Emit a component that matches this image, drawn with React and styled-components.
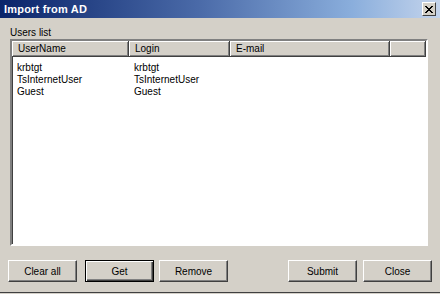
import React from "react";
import styled, { createGlobalStyle } from "styled-components";

const Global = createGlobalStyle`
  html, body { margin: 0; padding: 0; background: #d4d0c8; }
  body { font-family: "Liberation Sans", Arial, sans-serif; font-size: 10px; }
`;

const Dialog = styled.div`
  width: 440px;
  height: 293px;
  background: #d4d0c8;
  border-bottom: 1px solid #404040;
  display: flex;
  flex-direction: column;
  box-sizing: border-box;
`;

const TitleBar = styled.div`
  height: 18px;
  background: linear-gradient(to right, #0a246a 0%, #4a6aa8 45%, #8aaedc 80%, #c4d4ec 100%);
  display: flex;
  align-items: center;
  justify-content: space-between;
  padding: 0 4px 0 4px;
  flex-shrink: 0;
`;

const Title = styled.span`
  color: #fff;
  font-weight: bold;
  font-size: 11px;
  letter-spacing: 0.2px;
`;

const CloseBox = styled.div`
  width: 14px;
  height: 14px;
  box-sizing: border-box;
  background: #d4d0c8;
  border: 1px solid;
  border-color: #fff #404040 #404040 #fff;
  display: flex;
  align-items: center;
  justify-content: center;
`;

const Body = styled.div`
  display: flex;
  flex-direction: column;
  padding: 9px 12px 0 10px;
`;

const Label = styled.div`
  color: #000;
  line-height: 11px;
  margin-bottom: 1px;
`;

const ListBox = styled.div`
  height: 207px;
  background: #fff;
  border: 2px solid;
  border-color: #808080 #fff #fff #808080;
  box-shadow: inset 1px 1px 0 #404040;
  display: flex;
  flex-direction: column;
  box-sizing: border-box;
`;

const Header = styled.div`
  display: flex;
  height: 16px;
  flex-shrink: 0;
`;

const HeadCell = styled.div`
  width: ${(p) => p.w}px;
  box-sizing: border-box;
  background: #d4d0c8;
  border-right: 1px solid #404040;
  border-bottom: 1px solid #404040;
  box-shadow: inset 1px 1px 0 #fff, inset -1px -1px 0 #808080;
  padding-left: 6px;
  line-height: 16px;
  color: #000;
  ${(p) => p.grow && "flex: 1;"}
`;

const Rows = styled.div`
  display: flex;
  flex-direction: column;
  padding-top: 5px;
`;

const Row = styled.div`
  display: flex;
  height: 12px;
  line-height: 12px;
`;

const Cell = styled.div`
  width: ${(p) => p.w}px;
  padding-left: 5px;
  box-sizing: border-box;
  color: #000;
  white-space: nowrap;
`;

const ButtonBar = styled.div`
  display: flex;
  align-items: center;
  padding: 14px 0 0 8px;
`;

const Btn = styled.button`
  width: 69px;
  height: 22px;
  font-family: inherit;
  font-size: 10px;
  color: #000;
  background: #d4d0c8;
  border: 1px solid;
  border-color: #fff #404040 #404040 #fff;
  box-shadow: inset -1px -1px 0 #808080;
  margin-right: ${(p) => p.mr || 0}px;
  padding: 0;
  ${(p) =>
    p.def &&
    `border: 1px solid #000; box-shadow: inset 1px 1px 0 #fff, inset -1px -1px 0 #404040, inset -2px -2px 0 #808080;`}
`;

const cols = [117, 101, 160];
const rows = [
  ["krbtgt", "krbtgt"],
  ["TsInternetUser", "TsInternetUser"],
  ["Guest", "Guest"],
];

export default function App() {
  return (
    <>
      <Global />
      <Dialog>
        <TitleBar>
          <Title>Import from AD</Title>
          <CloseBox>
            <svg width="8" height="7" viewBox="0 0 8 7">
              <path d="M0 0 L7 7 M1 0 L8 7 M7 0 L0 7 M8 0 L1 7" stroke="#000" strokeWidth="1" />
            </svg>
          </CloseBox>
        </TitleBar>
        <Body>
          <Label>Users list</Label>
          <ListBox>
            <Header>
              <HeadCell w={cols[0]}>UserName</HeadCell>
              <HeadCell w={cols[1]}>Login</HeadCell>
              <HeadCell w={cols[2]}>E-mail</HeadCell>
              <HeadCell grow />
            </Header>
            <Rows>
              {rows.map((r) => (
                <Row key={r[0]}>
                  <Cell w={cols[0]}>{r[0]}</Cell>
                  <Cell w={cols[1]}>{r[1]}</Cell>
                </Row>
              ))}
            </Rows>
          </ListBox>
        </Body>
        <ButtonBar>
          <Btn mr={8}>Clear all</Btn>
          <Btn def mr={5}>Get</Btn>
          <Btn mr={60}>Remove</Btn>
          <Btn mr={6}>Submit</Btn>
          <Btn>Close</Btn>
        </ButtonBar>
      </Dialog>
    </>
  );
}
